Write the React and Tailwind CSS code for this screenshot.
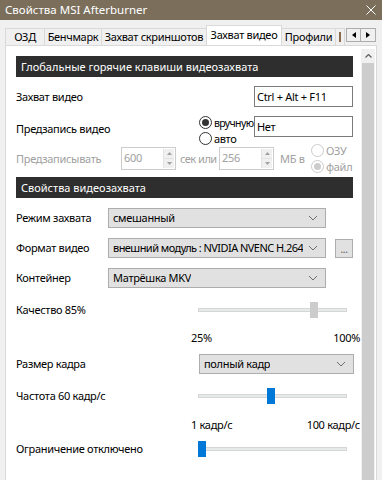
import React from 'react'

const font = { fontFamily: '"Noto Sans", "Open Sans", sans-serif' }

const Chevron = () => (
  <svg width="10" height="6" viewBox="0 0 10 6" className="shrink-0">
    <polyline points="1,1 5,5 9,1" fill="none" stroke="#6d6d6d" strokeWidth="1" />
  </svg>
)

const Header = ({ children, className = '' }) => (
  <div className={`ml-[10px] w-[337px] h-[21px] bg-[#2e2e2e] text-white flex items-center pl-[5px] tracking-normal whitespace-nowrap ${className}`}>{children}</div>
)

const Select = ({ value, width, textClass = '' }) => (
  <div className={`h-[20px] bg-[#e1e1e1] border border-[#adadad] flex items-center justify-between pl-[4px] pr-[7px] ${width}`}>
    <span className={`whitespace-nowrap overflow-hidden ${textClass}`}>{value}</span>
    <Chevron />
  </div>
)

const Radio = ({ checked, disabled, label, textClass = '' }) => (
  <div className="flex items-center gap-[2px] h-[13px] whitespace-nowrap">
    <div className={`w-[13px] h-[13px] shrink-0 rounded-full border flex items-center justify-center bg-white ${disabled ? 'border-[#cccccc]' : 'border-[#333333]'}`}>
      {checked && <div className={`w-[7px] h-[7px] rounded-full ${disabled ? 'bg-[#cccccc]' : 'bg-[#333333]'}`} />}
    </div>
    <span className={`${disabled ? 'text-[#a0a0a0]' : 'text-black'} ${textClass}`}>{label}</span>
  </div>
)

const Spinner = ({ value }) => (
  <div className="w-[55px] h-[23px] shrink-0 border border-[#cccccc] bg-white flex items-stretch">
    <span className="flex-1 pl-[2px] pt-[3px] text-[#a0a0a0]">{value}</span>
    <div className="w-[11px] mr-[1px] my-[1px] flex flex-col border-l border-[#e3e3e3]">
      <div className="flex-1 flex items-center justify-center bg-[#f0f0f0] border-b border-[#e3e3e3]">
        <svg width="5" height="3" viewBox="0 0 5 3"><polygon points="0,3 2.5,0 5,3" fill="#a0a0a0" /></svg>
      </div>
      <div className="flex-1 flex items-center justify-center bg-[#f0f0f0]">
        <svg width="5" height="3" viewBox="0 0 5 3"><polygon points="0,0 2.5,3 5,0" fill="#a0a0a0" /></svg>
      </div>
    </div>
  </div>
)

const Slider = ({ pos, disabled }) => (
  <div className="relative w-[149px] h-[16px] flex items-center">
    <div className="w-full h-[4px] bg-[#e7eaea] border border-[#d6d6d6]" />
    <div
      className={`absolute top-0 w-[8px] h-[16px] ${disabled ? 'bg-[#cccccc]' : 'bg-[#0078d7]'}`}
      style={{ left: pos }}
    />
  </div>
)

const tabs = [
  { label: 'ОЗД', w: 'w-[40px]' },
  { label: 'Бенчмарк', w: 'w-[58px]' },
  { label: 'Захват скриншотов', w: 'w-[106px]' },
]

export default function App() {
  return (
    <div className="w-[382px] h-[480px] bg-[#f0f0f0] overflow-hidden text-[11px] leading-[14px] tracking-[-0.3px] text-black" style={font}>
      <div className="h-[20px] bg-[#7b6f5c] flex items-center justify-between pl-[5px] pr-[6px]">
        <span className="text-white text-[11.5px] tracking-normal">Свойства MSI Afterburner</span>
        <svg width="10" height="10" viewBox="0 0 10 10">
          <path d="M0.5 0.5 L9.5 9.5 M9.5 0.5 L0.5 9.5" stroke="#ffffff" strokeWidth="1" />
        </svg>
      </div>

      <div className="h-[25px] flex items-end pl-[5px] whitespace-nowrap">
        {tabs.map(t => (
          <div key={t.label} className={`${t.w} h-[17px] border border-b-0 border-[#d9d9d9] -ml-px first:ml-0 flex items-center justify-center bg-[#f0f0f0]`}>
            {t.label}
          </div>
        ))}
        <div className="w-[76px] h-[20px] -ml-[1px] bg-white border border-b-0 border-[#d9d9d9] flex items-center justify-center pb-[2px] relative z-10">
          Захват видео
        </div>
        <div className="w-[55px] h-[17px] -ml-px border border-b-0 border-[#d9d9d9] flex items-center justify-center">
          Профили
        </div>
        <div className="w-[10px] h-[17px] -ml-px border border-b-0 border-[#d9d9d9] flex items-center pl-[3px] overflow-hidden">
          <span className="w-[2px] h-[10px] bg-[#8a6a4a]" />
        </div>
        <div className="flex mb-[3px] ml-[1px]">
          <div className="w-[15px] h-[14px] border border-[#adadad] bg-[#f0f0f0] flex items-center justify-center">
            <svg width="4" height="6" viewBox="0 0 4 6"><polygon points="4,0 0,3 4,6" fill="#000" /></svg>
          </div>
          <div className="w-[15px] h-[14px] border border-[#adadad] border-l-0 bg-[#f0f0f0] flex items-center justify-center">
            <svg width="4" height="6" viewBox="0 0 4 6"><polygon points="0,0 4,3 0,6" fill="#000" /></svg>
          </div>
        </div>
      </div>

      <div className="ml-[5px] w-[372px] h-[435px] bg-white border-l border-t border-r border-[#d9d9d9] flex whitespace-nowrap">
        <div className="w-[355px] flex flex-col">
          <Header className="mt-[10px]">Глобальные горячие клавиши видеозахвата</Header>

          <div className="mt-[9px] h-[21px] flex items-center pl-[10px]">
            <span className="w-[238px]">Захват видео</span>
            <div className="w-[99px] h-[21px] border border-[#7a7a7a] flex items-center pl-[2px]">Ctrl + Alt + F11</div>
          </div>

          <div className="mt-[8px] h-[25px] flex pl-[10px]">
            <span className="w-[183px] self-center pt-[2px]">Предзапись видео</span>
            <div className="w-[55px] flex flex-col gap-[3px] pt-[1px]">
              <Radio checked label="вручную" textClass="text-[10.5px] tracking-[-0.6px]" />
              <Radio label="авто" />
            </div>
            <div className="w-[99px] h-[21px] mt-[1px] border border-[#7a7a7a] flex items-center pl-[2px]">Нет</div>
          </div>

          <div className="mt-[7px] h-[23px] flex items-center pl-[10px]">
            <span className="w-[105px] text-[#a0a0a0]">Предзаписывать</span>
            <Spinner value="600" />
            <span className="w-[43px] pl-[4px] text-[#a0a0a0] tracking-[-0.5px]">сек или</span>
            <Spinner value="256" />
            <span className="w-[37px] pl-[6px] text-[#a0a0a0]">МБ в</span>
            <div className="flex flex-col gap-[3px]">
              <Radio disabled label="ОЗУ" />
              <Radio disabled checked label="файл" />
            </div>
          </div>

          <Header className="mt-[7px]">Свойства видеозахвата</Header>

          <div className="mt-[10px] h-[20px] flex items-center pl-[10px]">
            <span className="w-[92px]">Режим захвата</span>
            <Select value="смешанный" width="w-[218px]" />
          </div>

          <div className="mt-[10px] h-[20px] flex items-center pl-[10px]">
            <span className="w-[92px]">Формат видео</span>
            <Select value="внешний модуль : NVIDIA NVENC H.264" width="w-[218px]" textClass="tracking-[-0.55px]" />
            <div className="ml-[9px] w-[18px] h-[19px] bg-[#e1e1e1] border border-[#adadad] flex items-end justify-center pb-[3px] text-[#555] text-[10px] leading-[10px]">...</div>
          </div>

          <div className="mt-[10px] h-[20px] flex items-center pl-[10px]">
            <span className="w-[92px]">Контейнер</span>
            <Select value="Матрёшка MKV" width="w-[218px]" />
          </div>

          <div className="mt-[14px] h-[16px] flex items-center pl-[10px]">
            <span className="w-[182px]">Качество 85%</span>
            <Slider pos={112} disabled />
          </div>

          <div className="mt-[13px] h-[14px] flex items-center justify-between pl-[185px] w-[354px]">
            <span>25%</span>
            <span>100%</span>
          </div>

          <div className="mt-[9px] h-[20px] flex items-center pl-[10px]">
            <span className="w-[183px]">Размер кадра</span>
            <Select value="полный кадр" width="w-[155px]" />
          </div>

          <div className="mt-[14px] h-[16px] flex items-center pl-[10px]">
            <span className="w-[182px]">Частота 60 кадр/с</span>
            <Slider pos={69} />
          </div>

          <div className="mt-[14px] h-[14px] flex items-center justify-between pl-[185px] w-[354px]">
            <span>1 кадр/с</span>
            <span>100 кадр/с</span>
          </div>

          <div className="mt-[9px] h-[16px] flex items-center pl-[10px]">
            <span className="w-[182px]">Ограничение отключено</span>
            <Slider pos={0} />
          </div>
        </div>

        <div className="w-[14px] mt-[3px] bg-[#f0f0f0] flex flex-col">
          <div className="h-[14px] flex items-center justify-center">
            <svg width="7" height="4" viewBox="0 0 7 4"><polyline points="0.5,3.5 3.5,0.5 6.5,3.5" fill="none" stroke="#606060" strokeWidth="1.2" /></svg>
          </div>
          <div className="mx-[1px] flex-1 bg-[#cdcdcd]" />
        </div>
      </div>
    </div>
  )
}
